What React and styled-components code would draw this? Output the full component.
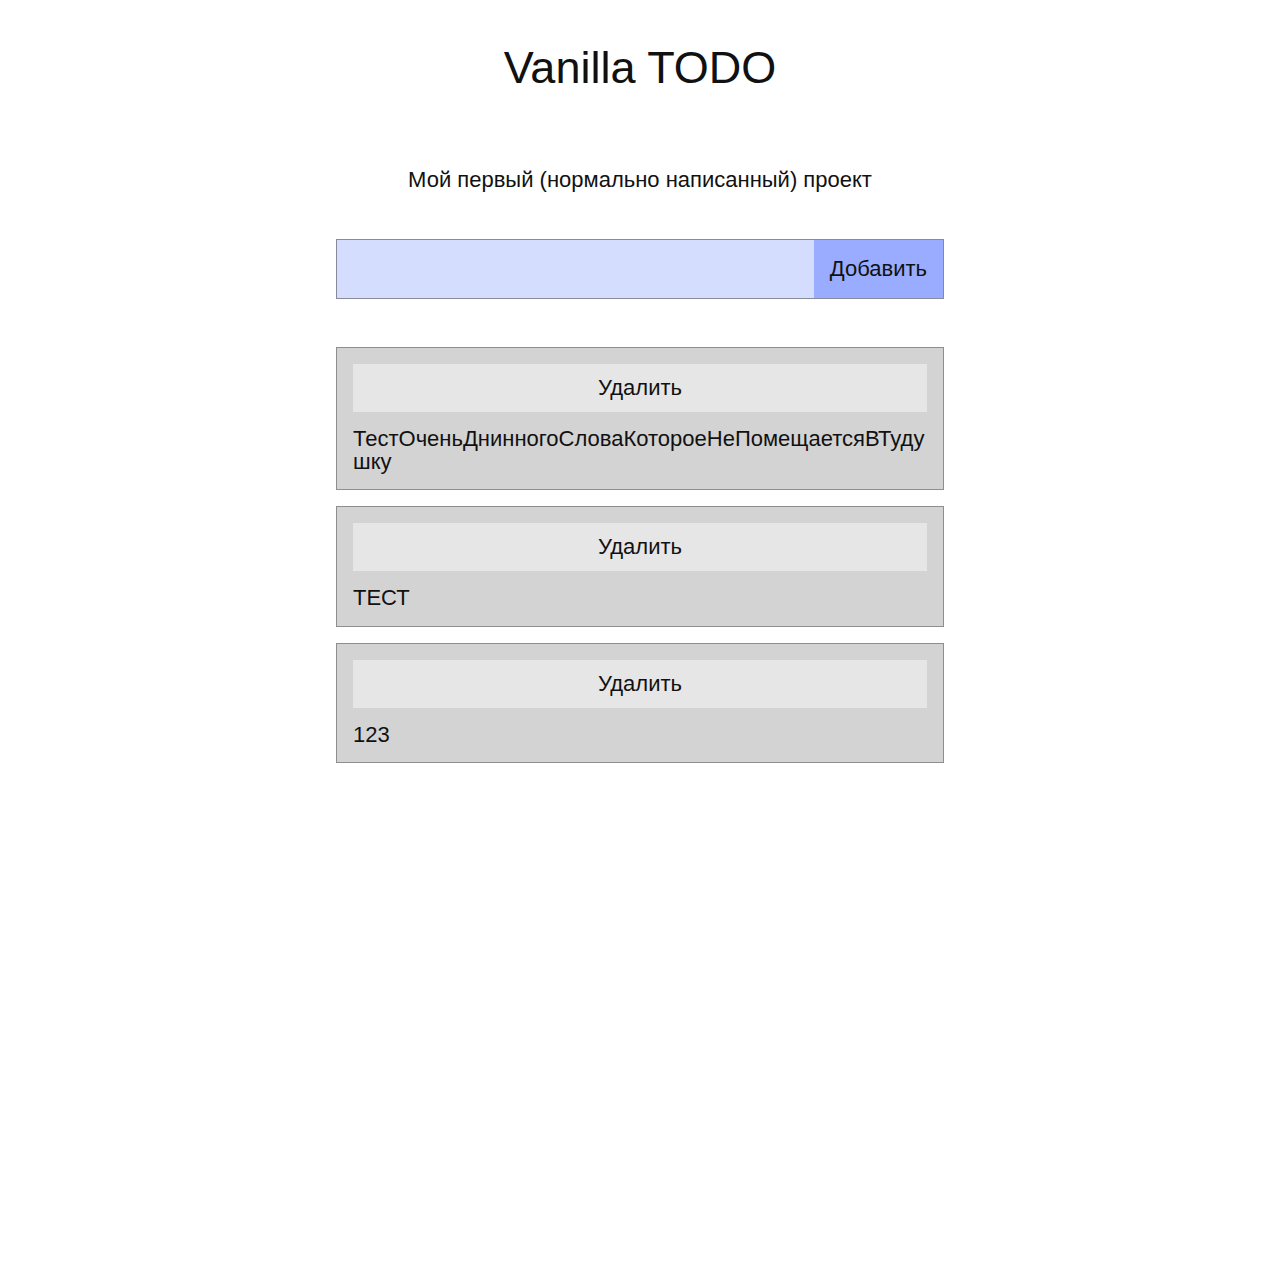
import React, { useState } from 'react';
import styled, { createGlobalStyle } from 'styled-components';

const GlobalStyle = createGlobalStyle`
  body {
    margin: 0;
    background: #fff;
    color: #111;
    font-family: "Liberation Sans", Arial, sans-serif;
    font-size: 22px;
  }
`;

const Page = styled.div`
  width: 608px;
  margin: 0 auto;
  padding-top: 43px;
  display: flex;
  flex-direction: column;
`;

const Title = styled.h1`
  margin: 0;
  font-size: 45px;
  font-weight: 400;
  line-height: 50px;
  text-align: center;
`;

const Subtitle = styled.p`
  margin: 74px 0 0;
  font-size: 22px;
  line-height: 25px;
  text-align: center;
`;

const Form = styled.form`
  margin-top: 47px;
  display: flex;
  height: 60px;
  box-sizing: border-box;
  border: 1px solid #868a99;
`;

const Input = styled.input`
  flex: 1;
  min-width: 0;
  border: none;
  outline: none;
  background: #d5ddff;
  font: inherit;
  padding: 0 16px;
`;

const AddButton = styled.button`
  border: none;
  background: #99acff;
  color: #111;
  font-family: inherit;
  font-size: 22px;
  padding: 0 16px;
  cursor: pointer;
`;

const List = styled.ul`
  list-style: none;
  margin: 48px 0 0;
  padding: 0;
  display: flex;
  flex-direction: column;
  gap: 16px;
`;

const Item = styled.li`
  background: #d3d3d3;
  border: 1px solid #8e8e8e;
  padding: 16px;
  display: flex;
  flex-direction: column;
  gap: 16px;
`;

const DeleteButton = styled.button`
  height: 48px;
  border: none;
  background: #e6e6e6;
  color: #111;
  font-family: inherit;
  font-size: 22px;
  cursor: pointer;
`;

const ItemText = styled.div`
  font-size: 22px;
  line-height: 22.5px;
  word-break: break-all;
`;

export default function App() {
  const [todos, setTodos] = useState([
    'ТестОченьДнинногоСловаКотороеНеПомещаетсяВТудушку',
    'ТЕСТ',
    '123',
  ]);
  const [value, setValue] = useState('');

  const add = (e) => {
    e.preventDefault();
    if (!value.trim()) return;
    setTodos([value, ...todos]);
    setValue('');
  };

  return (
    <>
      <GlobalStyle />
      <Page>
        <Title>Vanilla TODO</Title>
        <Subtitle>Мой первый (нормально написанный) проект</Subtitle>
        <Form onSubmit={add}>
          <Input value={value} onChange={(e) => setValue(e.target.value)} />
          <AddButton type="submit">Добавить</AddButton>
        </Form>
        <List>
          {todos.map((t, i) => (
            <Item key={i}>
              <DeleteButton onClick={() => setTodos(todos.filter((_, j) => j !== i))}>
                Удалить
              </DeleteButton>
              <ItemText>{t}</ItemText>
            </Item>
          ))}
        </List>
      </Page>
    </>
  );
}
